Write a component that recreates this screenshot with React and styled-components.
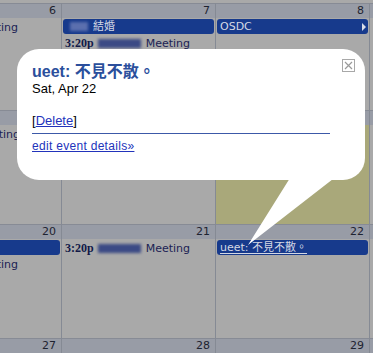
import styled, { createGlobalStyle } from 'styled-components';

const GlobalStyle = createGlobalStyle`
    html, body {
        margin: 0;
        padding: 0;
        background-color: #a9a9a9;
        overflow: hidden;
    }
`;

const weeks = [
    {
        height: 107,
        days: [
            { num: 6, events: [{ type: 'timed', blur: 25 }] },
            { num: 7, events: [{ type: 'bar', title: '結婚', blur: 18 }, { type: 'timed', blur: 43 }] },
            { num: 8, events: [{ type: 'bar', title: 'OSDC', more: true }] },
            { num: 9, events: [] },
        ],
    },
    {
        height: 114,
        days: [
            { num: 13, events: [{ type: 'timed', blur: 27 }] },
            { num: 14, events: [] },
            { num: 15, today: true, events: [] },
            { num: 16, events: [] },
        ],
    },
    {
        height: 114,
        days: [
            { num: 20, events: [{ type: 'bar', title: '' }, { type: 'timed', blur: 25 }] },
            { num: 21, events: [{ type: 'timed', blur: 43 }] },
            { num: 22, events: [{ type: 'bar', title: 'ueet: 不見不散。', link: true }] },
            { num: 23, events: [] },
        ],
    },
    {
        height: 40,
        days: [
            { num: 27, events: [] },
            { num: 28, events: [] },
            { num: 29, events: [] },
            { num: 30, events: [] },
        ],
    },
];

function EventLine({ ev }) {
    if (ev.type === 'bar') {
        return (
            <Bar>
                {ev.blur && <Blur width={ev.blur} light />}
                <BarTitle link={ev.link}>{ev.title}</BarTitle>
                {ev.more && <MoreArrow />}
            </Bar>
        );
    }
    return (
        <Timed>
            <Time>3:20p</Time>
            <Blur width={ev.blur} />
            <span>Meeting</span>
        </Timed>
    );
}

export default function App() {
    return (
        <Page>
            <GlobalStyle />
            <Grid>
                <Sliver />
                {weeks.map((week, i) => (
                    <Week key={i} height={week.height}>
                        {week.days.map(day => (
                            <Day key={day.num} today={day.today}>
                                <DayHeader>{day.num}</DayHeader>
                                {day.events.map((ev, j) => (
                                    <EventLine key={j} ev={ev} />
                                ))}
                            </Day>
                        ))}
                    </Week>
                ))}
            </Grid>
            <Tail width="373" height="353" viewBox="0 0 373 353">
                <path d="M290,178 L248,245 L333,179 Q342,179 348,176 Z" fill="#ffffff" />
            </Tail>
            <Bubble>
                <Close>
                    <svg width="11" height="11" viewBox="0 0 11 11">
                        <path d="M2,2 L9,9 M9,2 L2,9" stroke="#9a9a9a" strokeWidth="1.2" />
                    </svg>
                </Close>
                <Title>ueet: 不見不散。</Title>
                <When>Sat, Apr 22</When>
                <Actions>[<a href="#">Delete</a>]</Actions>
                <Rule />
                <EditLink href="#">edit event details»</EditLink>
            </Bubble>
        </Page>
    );
}

// styled components
const Page = styled.div`
    position: relative;
    width: 373px;
    height: 353px;
    overflow: hidden;
    font-family: "DejaVu Sans", Verdana, sans-serif;
`;
const Grid = styled.div`
    display: flex;
    flex-direction: column;
    margin-left: -93px;
    width: 620px;
`;
const Sliver = styled.div`
    height: 3px;
    background-color: #a9a9a9;
`;
const Week = styled.div`
    display: grid;
    grid-template-columns: repeat(4, 154px);
    height: ${props => props.height}px;
    flex-shrink: 0;
`;
const Day = styled.div`
    box-sizing: border-box;
    border-left: 1px solid #858a94;
    background-color: ${props => props.today ? '#a9a87a' : '#a9a9a9'};
    display: flex;
    flex-direction: column;
    overflow: hidden;
    min-width: 0;
`;
const DayHeader = styled.div`
    height: 15px;
    box-sizing: border-box;
    border-top: 1px solid #878b95;
    background-color: #989ca6;
    color: #1e2330;
    font-size: 11px;
    line-height: 14px;
    text-align: right;
    padding-right: 5px;
    margin-bottom: 1px;
`;
const Bar = styled.div`
    height: 15px;
    margin: 0 1px 1px 1px;
    border-radius: 3px;
    background-color: #173a8c;
    display: flex;
    align-items: center;
    padding: 0 3px;
    position: relative;
`;
const BarTitle = styled.span`
    color: #d4d8e4;
    font-size: 11px;
    line-height: 13px;
    white-space: nowrap;
    text-decoration: ${props => props.link ? 'underline' : 'none'};
    text-underline-offset: 2px;
    font-family: "DejaVu Sans", "Noto Sans CJK TC", sans-serif;
`;
const MoreArrow = styled.span`
    position: absolute;
    right: 2px;
    top: 4px;
    width: 0;
    height: 0;
    border-top: 4px solid transparent;
    border-bottom: 4px solid transparent;
    border-left: 4px solid #d8dce8;
`;
const Blur = styled.span`
    display: inline-block;
    width: ${props => props.width}px;
    height: 9px;
    margin: 0 5px 0 4px;
    background-color: ${props => props.light ? '#5b6fae' : '#3b4a85'};
    filter: blur(1.5px);
    flex-shrink: 0;
`;
const Timed = styled.div`
    height: 16px;
    display: flex;
    align-items: center;
    padding-left: 3px;
    color: #1b2254;
    font-size: 11px;
    white-space: nowrap;
`;
const Time = styled.span`
    font-family: "Liberation Serif", serif;
    font-weight: 700;
    font-size: 12px;
    color: #121a48;
`;
const Tail = styled.svg`
    position: absolute;
    left: 0;
    top: 0;
`;
const Bubble = styled.div`
    position: absolute;
    left: 17px;
    top: 49px;
    width: 348px;
    height: 131px;
    box-sizing: border-box;
    border-radius: 22px;
    background-color: #ffffff;
    padding: 13px 15px 0 15px;
    display: flex;
    flex-direction: column;
    font-family: "Liberation Sans", Arial, sans-serif;
`;
const Close = styled.div`
    position: absolute;
    right: 10px;
    top: 10px;
    width: 13px;
    height: 13px;
    box-sizing: border-box;
    border: 1px solid #a8a8a8;
    display: flex;
    align-items: center;
    justify-content: center;
`;
const Title = styled.div`
    font-family: "Liberation Sans", "Noto Sans CJK TC", sans-serif;
    font-weight: 700;
    font-size: 16px;
    line-height: 19px;
    color: #2b4f9c;
`;
const When = styled.div`
    font-size: 13px;
    line-height: 15px;
    color: #000000;
`;
const Actions = styled.div`
    margin-top: 17px;
    font-size: 13px;
    line-height: 15px;
    color: #000000;
    a {
        color: #2233bb;
        text-decoration: underline;
    }
`;
const Rule = styled.div`
    margin-top: 5px;
    width: 298px;
    height: 1px;
    background-color: #3c59a8;
`;
const EditLink = styled.a`
    margin-top: 5px;
    font-size: 12px;
    letter-spacing: 0.3px;
    line-height: 14px;
    color: #2233bb;
    text-decoration: underline;
    align-self: flex-start;
`;
